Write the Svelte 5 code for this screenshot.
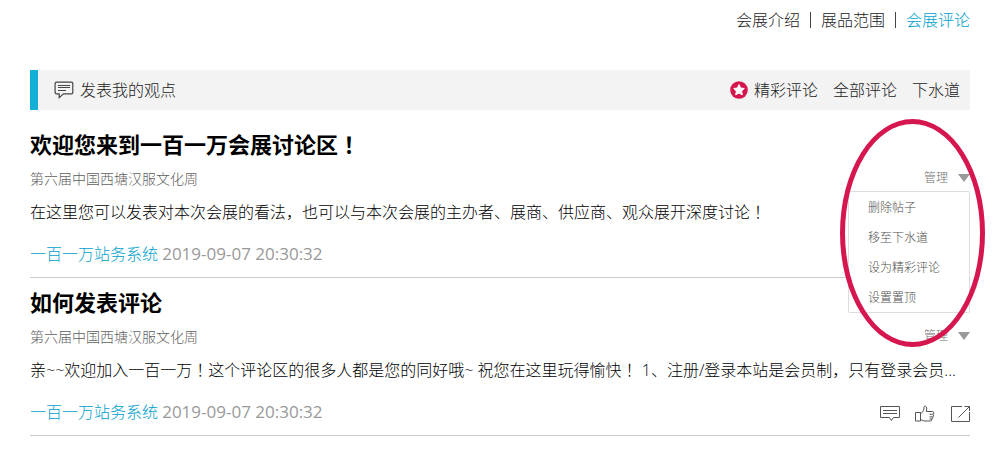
<script>
  const sections = ['会展介绍', '展品范围', '会展评论'];
  const current = '会展评论';
  const actions = ['删除帖子', '移至下水道', '设为精彩评论', '设置置顶'];
  const posts = [
    {
      title: '欢迎您来到一百一万会展讨论区！',
      event: '第六届中国西塘汉服文化周',
      body: '在这里您可以发表对本次会展的看法，也可以与本次会展的主办者、展商、供应商、观众展开深度讨论！',
      author: '一百一万站务系统',
      time: '2019-09-07 20:30:32'
    },
    {
      title: '如何发表评论',
      event: '第六届中国西塘汉服文化周',
      body: '亲~~欢迎加入一百一万！这个评论区的很多人都是您的同好哦~ 祝您在这里玩得愉快！ 1、注册/登录本站是会员制，只有登录会员...',
      author: '一百一万站务系统',
      time: '2019-09-07 20:30:32'
    }
  ];
  let openMenu = $state(0);

  // Separates exclamation marks, which are set centred in their cell.
  const pieces = (text) => text.split(/(！)/).filter(Boolean);
</script>

{#snippet centred(text)}
  {#each pieces(text) as piece}{#if piece === '！'}<span class="mark" lang="zh-TW">{piece}</span>{:else}{piece}{/if}{/each}
{/snippet}

<div class="page" lang="zh-CN">
  <nav>
    {#each sections as name}
      <a href="#top" class:current={name === current}>{name}</a>
    {/each}
  </nav>

  <header>
    <a class="write" href="#write">
      <svg width="20" height="18" viewBox="0 0 20 18" fill="none" stroke="#444">
        <path stroke-width="1.2" d="M2.5 1.1H17.5Q18.8 1.1 18.8 2.5V11.5Q18.8 12.9 17.5 12.9H9.5L5.2 16.6V12.9H2.5Q1.1 12.9 1.1 11.5V2.5Q1.1 1.1 2.5 1.1Z" />
        <path d="M4 4.5H16M4 6.5H16M4 9.5H12" />
      </svg>
      发表我的观点
    </a>
    <div class="filters">
      <a class="best" href="#best">
        <svg width="18" height="18" viewBox="0 0 18 18">
          <circle cx="9" cy="9" r="8.8" fill="#d6174f" />
          <path fill="#fff" stroke="#fff" stroke-linejoin="round" d="M9 3.6 10.6 7 14.3 7.5 11.6 10.1 12.3 13.8 9 12 5.7 13.8 6.4 10.1 3.7 7.5 7.4 7Z" />
        </svg>
        精彩评论
      </a>
      <a href="#all">全部评论</a>
      <a href="#drain">下水道</a>
    </div>
  </header>

  <main>
    {#each posts as post, i}
      <article>
        <h2>{@render centred(post.title)}</h2>
        <div class="row">
          <span class="event">{post.event}</span>
          <div class="manage">
            <button class="toggle" aria-expanded={openMenu === i} onclick={() => (openMenu = openMenu === i ? -1 : i)}>
              管理
              <svg width="12" height="8" viewBox="0 0 12 8"><path fill="#999" d="M0 0H12L6 8Z" /></svg>
            </button>
            {#if openMenu === i}
              <div class="menu">
                {#each actions as action}
                  <button>{action}</button>
                {/each}
              </div>
              <div class="ring"></div>
            {/if}
          </div>
        </div>
        <p>{@render centred(post.body)}</p>
        <footer>
          <div><a class="author" href="#author">{post.author}</a> <time>{post.time}</time></div>
          {#if i === 1}
            <div class="tools">
              <button aria-label="回复">
                <svg width="20" height="18" viewBox="0 0 20 18" fill="none" stroke="#555">
                  <path d="M.5 1.5H19.5V12.5H13.5L11.5 15.5 9.5 12.5H.5ZM3 5.5H17M3 8.5H17" />
                </svg>
              </button>
              <button aria-label="点赞">
                <svg width="20" height="18" viewBox="0 0 20 18" fill="none" stroke="#555" stroke-linejoin="round">
                  <path d="M.5 7.5H5.5V16H.5ZM5.5 8.5C8 7.5 9 5 9 2Q9.2 1 10.4 1.2 12 1.6 11.8 4L11.3 6.5H17.5Q19.4 6.8 18.8 8.6L17.6 9.3Q19.3 9.7 18.4 11.4L17.2 11.9Q18.4 12.5 17.6 13.7L16.6 14Q17.2 16 15.2 16H9L5.5 14.5M14.5 9.3H17.6M14.5 11.9H17.2M14.5 14H16.6" />
                </svg>
              </button>
              <button aria-label="分享">
                <svg width="20" height="18" viewBox="0 0 20 18" fill="none" stroke="#555">
                  <path d="M12 1.5H1.5V16.5H19.5V7M8.5 12.5 19.5 1.5M14.5 1.5H19.5V6" />
                </svg>
              </button>
            </div>
          {/if}
        </footer>
      </article>
    {/each}
  </main>
</div>

<style>
  :global(body) {
    margin: 0;
    background: #fff;
  }
  .page {
    padding: 0 30px;
    font-family: 'Open Sans', 'Noto Sans CJK SC', sans-serif;
    font-size: 16px;
    font-weight: 300;
    color: #222;
  }
  .mark {
    font-family: 'Noto Sans CJK TC', sans-serif;
    line-height: 0;
  }
  a {
    color: inherit;
    text-decoration: none;
  }
  button {
    padding: 0;
    border: 0;
    background: none;
    font: inherit;
    color: inherit;
    cursor: pointer;
  }
  svg {
    display: block;
    flex: none;
  }
  nav {
    display: flex;
    justify-content: flex-end;
    align-items: center;
    height: 40px;
    margin-bottom: 30px;
  }
  nav a {
    line-height: 16px;
  }
  nav a + a {
    margin-left: 10px;
    padding-left: 10px;
    border-left: 1px solid #444;
  }
  .current,
  .author {
    color: #00a0cc;
  }
  header {
    display: flex;
    justify-content: space-between;
    align-items: center;
    height: 40px;
    margin-bottom: 10px;
    padding: 0 10px 0 16px;
    border-left: 8px solid #15aed6;
    background: #f3f3f3;
    line-height: 20px;
  }
  .write,
  .best {
    display: flex;
    align-items: center;
    gap: 6px;
  }
  .filters {
    display: flex;
    gap: 15px;
  }
  article {
    padding: 8px 0 7px;
    border-bottom: 1px solid #ccc;
  }
  h2 {
    margin: 0 0 2px;
    font-size: 22px;
    line-height: 32px;
    color: #000;
  }
  .row {
    display: flex;
    justify-content: space-between;
    height: 34px;
    font-size: 14px;
    line-height: 34px;
    color: #606060;
  }
  .manage {
    position: relative;
    font-size: 12px;
  }
  .toggle {
    display: flex;
    align-items: center;
    gap: 10px;
    height: 32px;
    color: #707070;
  }
  .menu {
    position: absolute;
    z-index: 1;
    top: 29px;
    right: 0;
    width: 120px;
    border: 1px solid #ddd;
    border-radius: 2px;
    background: #fff;
    color: #505050;
  }
  .menu button {
    display: block;
    width: 100%;
    padding: 2px 0 0 19px;
    line-height: 28px;
    text-align: left;
  }
  .ring {
    position: absolute;
    z-index: 2;
    top: -43px;
    right: -15px;
    box-sizing: border-box;
    width: 145px;
    height: 228px;
    border: 5px solid #d6174f;
    border-radius: 50%;
    pointer-events: none;
  }
  p {
    margin: 0 0 10px;
    line-height: 32px;
    white-space: nowrap;
    overflow: hidden;
    text-overflow: ellipsis;
    color: #000;
  }
  footer {
    display: flex;
    justify-content: space-between;
    align-items: center;
    height: 32px;
    line-height: 32px;
    color: #999;
  }
  time {
    font-size: 17px;
    font-weight: 400;
  }
  .tools {
    display: flex;
    gap: 15px;
    padding-top: 4px;
  }
</style>
